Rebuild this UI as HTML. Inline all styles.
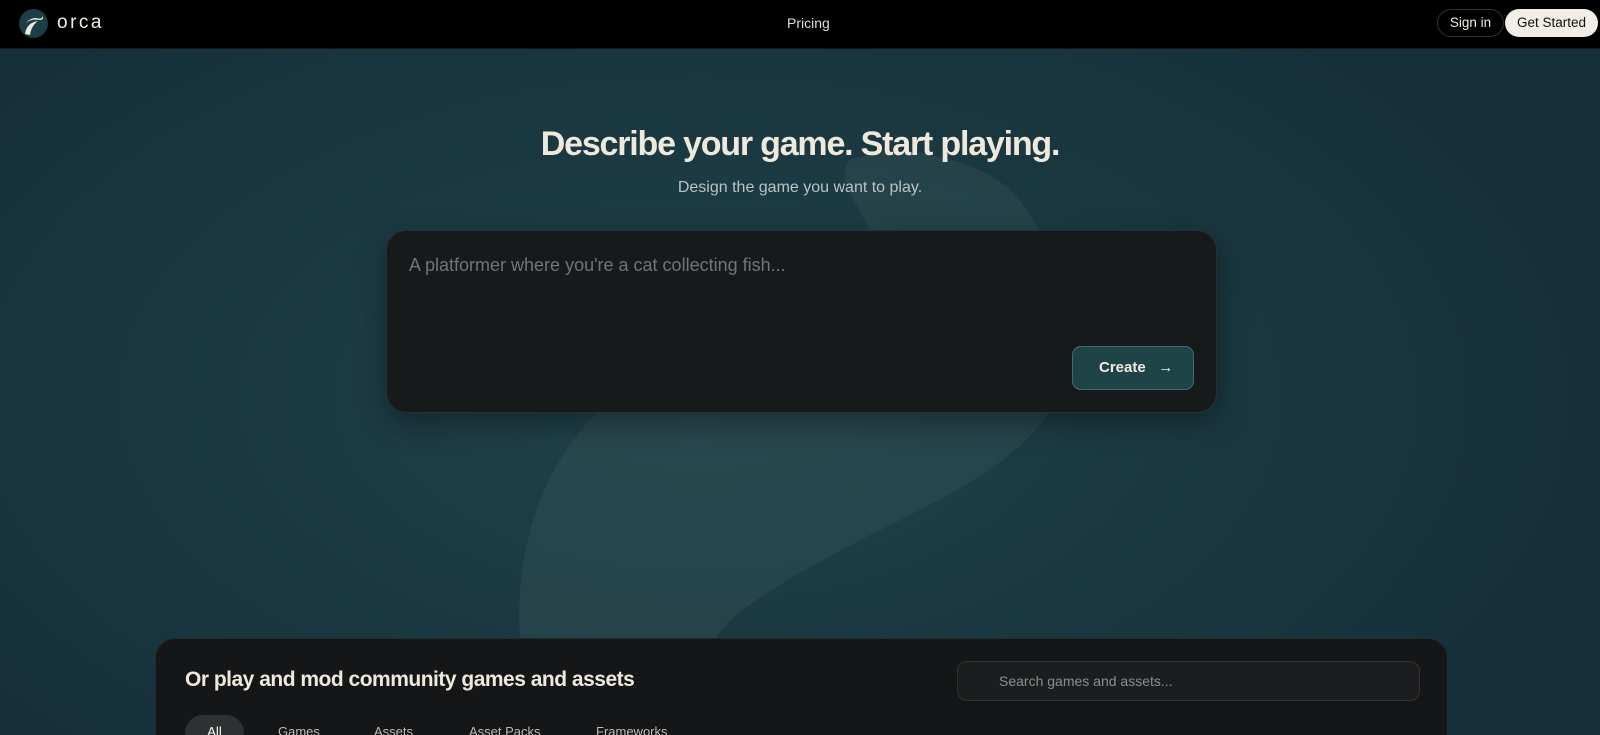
<!DOCTYPE html>
<html><head><meta charset="utf-8"><style>
*{margin:0;padding:0;box-sizing:border-box}
html,body{width:1600px;height:735px;overflow:hidden}
body{font-family:"Liberation Sans",sans-serif;background:#1a3640;position:relative}
.bg{position:absolute;left:0;top:49px;width:1600px;height:686px;background:radial-gradient(ellipse 900px 500px at 700px 350px,#21424b 0%,#1a3740 60%,#15303a 100%)}
nav{position:absolute;top:0;left:0;width:1600px;height:49px;background:#000;border-bottom:1px solid #1a1a1a}
.logo{position:absolute;left:19px;top:9px;width:29px;height:29px;border-radius:50%;background:#1c3f47;overflow:hidden}
.brand{position:absolute;left:57px;top:12px;color:#f2ede4;font-size:19px;letter-spacing:2.5px}
.pricing{position:absolute;left:787px;top:15px;color:#ddd;font-size:14px}
.signin{position:absolute;left:1437px;top:9px;width:67px;height:28px;border:1px solid #333;border-radius:14px;color:#f2ede4;font-size:13.5px;text-align:center;line-height:26px}
.gs{position:absolute;left:1505px;top:9px;width:93px;height:28px;border-radius:14px;background:#f2ede6;color:#111;font-size:13.5px;text-align:center;line-height:28px}
h1{position:absolute;top:125px;left:0;width:1600px;text-align:center;color:#efe9dc;font-size:34px;font-weight:bold;letter-spacing:-1.2px}
.sub{position:absolute;top:179px;width:1600px;text-align:center;color:#b9c3c4;font-size:16px}
.box{position:absolute;left:386px;top:230px;width:831px;height:183px;border-radius:20px;background:#171a1b;border:1px solid #2a2f30;box-shadow:0 10px 30px rgba(0,0,0,.35)}
.ph{position:absolute;left:22px;top:24px;color:#6f7576;font-size:18px}
.create{position:absolute;left:685px;top:115px;width:122px;height:44px;border-radius:9px;background:#1f4448;border:1px solid #46696b;color:#f2ede4;font-size:15px;font-weight:bold;line-height:42px;padding-left:26px}
.panel{position:absolute;left:155px;top:638px;width:1293px;height:120px;border-radius:20px;background:#151617;border:1px solid #262a2b}
.panel h2{position:absolute;left:29px;top:29px;color:#efe9dc;font-size:21px;font-weight:bold;letter-spacing:-0.5px}
.search{position:absolute;left:801px;top:22px;width:463px;height:40px;border-radius:10px;background:#1c1d1e;border:1px solid #333;color:#8b8e8f;font-size:14px;line-height:38px;padding-left:41px}
.tab{position:absolute;top:85px;color:#bbb;font-size:13px}
.all{position:absolute;left:29px;top:76px;width:59px;height:36px;border-radius:18px;background:#2e3132;color:#fff;font-size:13px;text-align:center;padding-top:9px}
</style></head><body>
<div class="bg"></div>
<svg style="position:absolute;left:0;top:0" width="1600" height="735">
<path d="M850 160 C900 140 980 160 1010 190 C1050 230 1070 300 1065 360 C1060 430 1000 470 900 520 C800 570 730 610 715 640 L520 640 C515 560 535 480 590 420 C640 370 720 340 840 300 C880 280 880 250 870 230 C855 200 835 175 850 160Z" fill="#3a5558" opacity=".35"/>
</svg>
<nav>
<div class="logo"><svg width="29" height="29" viewBox="0 0 29 29"><path d="M6 25 C7 17 12 13 19 12 C15 15 12 19 11 26Z" fill="#efe9dc"/><path d="M6 15 C9 11 15 10 21 11 C24 11 25 9 23 7 C24 10 20 10 17 9 C12 9 8 12 6 15Z" fill="#efe9dc"/></svg></div>
<div class="brand">orca</div>
<div class="pricing">Pricing</div>
<div class="signin">Sign in</div>
<div class="gs">Get Started</div>
</nav>
<h1>Describe your game. Start playing.</h1>
<div class="sub">Design the game you want to play.</div>
<div class="box"><div class="ph">A platformer where you're a cat collecting fish...</div>
<div class="create">Create &nbsp;&nbsp;→</div></div>
<div class="panel">
<h2>Or play and mod community games and assets</h2>
<div class="search">Search games and assets...</div>
<div class="all">All</div>
<div class="tab" style="left:122px">Games</div>
<div class="tab" style="left:218px">Assets</div>
<div class="tab" style="left:313px">Asset Packs</div>
<div class="tab" style="left:440px">Frameworks</div>
</div>
</body></html>
